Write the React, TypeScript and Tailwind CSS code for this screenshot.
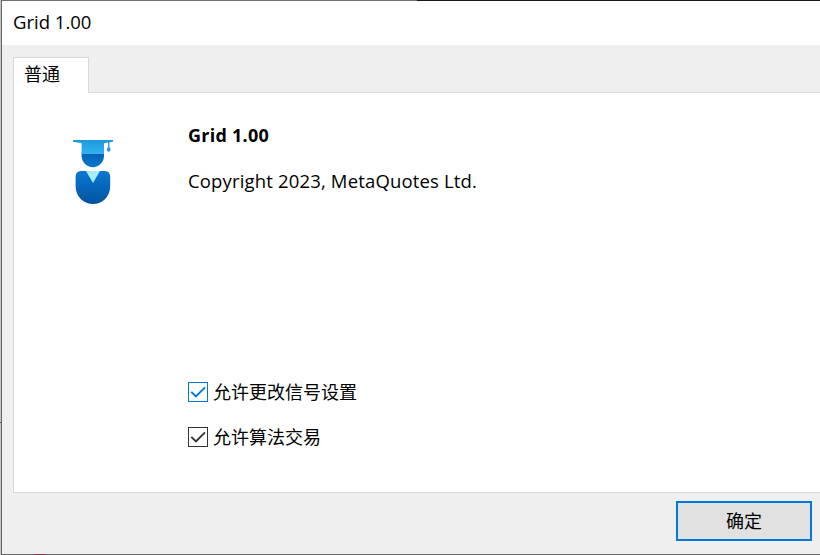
import type { ReactNode } from "react";

function Avatar() {
  return (
    <svg width="42" height="68" viewBox="0 0 42 68" className="block">
      <defs>
        <linearGradient id="cap" x1="0" y1="0" x2="0" y2="1">
          <stop offset="0" stopColor="#1f98da" />
          <stop offset="1" stopColor="#30b4f0" />
        </linearGradient>
        <linearGradient id="face" x1="0" y1="0" x2="0" y2="1">
          <stop offset="0" stopColor="#055fb2" />
          <stop offset="1" stopColor="#0878d0" />
        </linearGradient>
        <linearGradient id="body" x1="0" y1="0" x2="0" y2="1">
          <stop offset="0" stopColor="#0878d4" />
          <stop offset="1" stopColor="#04529f" />
        </linearGradient>
      </defs>
      <path d="M9.6 14H32V17.5A11.2 11.7 0 0 1 9.6 17.5Z" fill="url(#face)" />
      <path d="M1 2H41V3.8L32 5.2V16H9.6V5.2L1 3.8Z" fill="url(#cap)" />
      <path d="M36.7 3.5V9.5" stroke="#2c9cda" strokeWidth="1.4" />
      <rect x="35" y="9.2" width="3.4" height="4.2" rx="1.2" fill="#2c9cda" />
      <path d="M9 33H33Q38.2 33 38.2 39V48C38.2 59 30 66 21 66S3.6 59 3.6 48V39Q3.6 33 9 33Z" fill="url(#body)" />
      <path d="M14 33H28L21 45Z" fill="#a6ecfd" />
    </svg>
  );
}

function Check({ color, children }: { color: string; children: ReactNode }) {
  return (
    <label className="flex h-[20px] items-center">
      <svg width="20" height="20" viewBox="0 0 20 20" className="mr-[5px] block shrink-0">
        <rect x="0.5" y="0.5" width="19" height="19" fill="#fff" stroke={color} />
        <path d="M3.3 9.9L7.9 14.4L17 5.4" fill="none" stroke={color} strokeWidth="1.9" />
      </svg>
      <span className="text-[18px] leading-[20px] whitespace-nowrap">{children}</span>
    </label>
  );
}

export default function App() {
  return (
    <div className="flex h-[555px] w-[820px] overflow-hidden bg-[#efefef] font-['Open_Sans','Noto_Sans_CJK_SC',sans-serif] text-black">
      <div className="flex w-px shrink-0 flex-col bg-[#c4c4c4]">
        <div className="mt-[422px] h-px bg-[#555]" />
      </div>
      <div className="w-px shrink-0 bg-[#666]" />
      <div className="flex min-w-0 flex-1 flex-col">
        <div className="flex h-px shrink-0">
          <div className="w-[415px] bg-[#707070]" />
          <div className="flex-1 bg-[#181818]" />
        </div>
        <header className="flex h-[44px] shrink-0 items-center bg-white pb-[2px] pl-[11px]">
          <span className="text-[18.5px] leading-[24px]">Grid 1.00</span>
        </header>
        <main className="flex flex-1 flex-col pt-[12px] pl-[11px]">
          <div className="flex h-[35px] shrink-0">
            <div className="z-10 h-[36px] w-[76px] border border-b-0 border-[#d9d9d9] bg-white pt-[4px] pl-[10px] text-[18px] leading-[24px]">
              普通
            </div>
          </div>
          <section className="flex h-[401px] shrink-0 border border-r-0 border-[#d9d9d9] bg-white">
            <div className="w-[174px] shrink-0 pt-[45px] pl-[58px]">
              <Avatar />
            </div>
            <div className="flex flex-col pt-[30px]">
              <h1 className="text-[18px] leading-[24px] font-bold tracking-[0.25px]">Grid 1.00</h1>
              <p className="mt-[22px] text-[18.5px] leading-[24px] tracking-[0.16px] whitespace-nowrap">
                Copyright 2023, MetaQuotes Ltd.
              </p>
              <div className="mt-[189px] flex flex-col gap-[25px]">
                <Check color="#0078d7">允许更改信号设置</Check>
                <Check color="#333333">允许算法交易</Check>
              </div>
            </div>
          </section>
          <footer className="flex justify-end pt-[8px] pr-[8px]">
            <button className="h-[40px] w-[136px] border-2 border-[#0078d7] bg-[#e1e1e1] text-[18px] leading-[24px]">
              确定
            </button>
          </footer>
        </main>
        <div className="flex h-px shrink-0 bg-[#666]">
          <div className="ml-[32px] w-[12px] bg-[#873840]" />
        </div>
      </div>
    </div>
  );
}
